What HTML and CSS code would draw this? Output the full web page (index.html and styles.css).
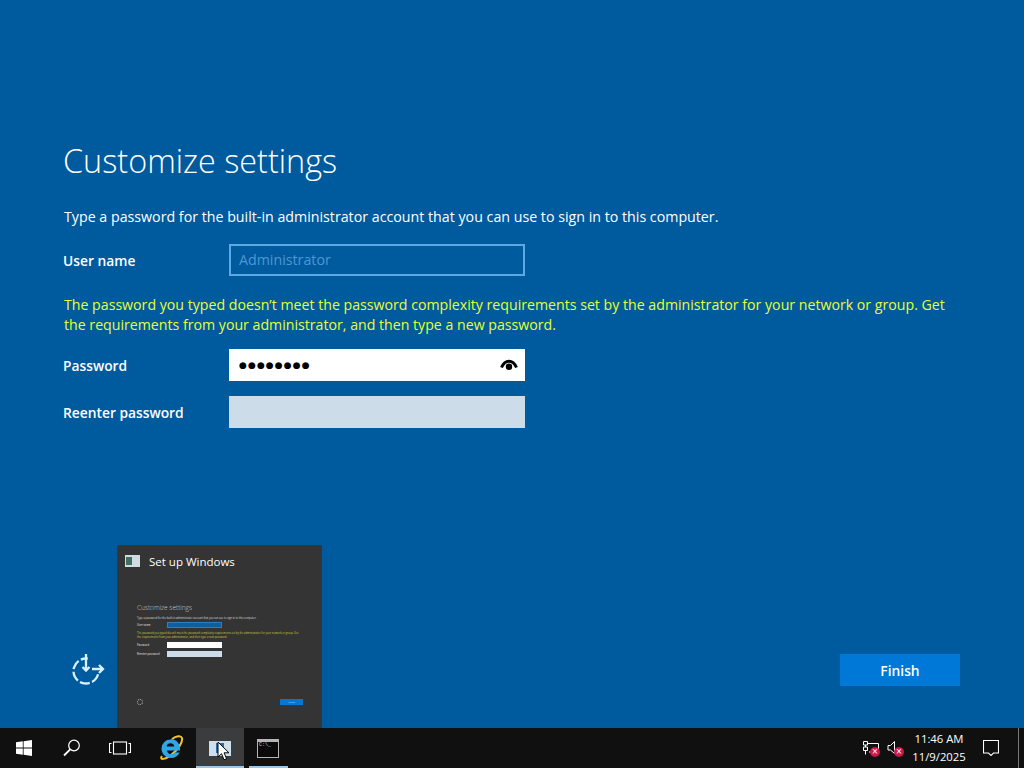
FILE: index.html
```html
<!DOCTYPE html>
<html lang="en">
<head>
<meta charset="utf-8">
<title>Customize settings</title>
<link rel="stylesheet" href="styles.css">
</head>
<body>
<div class="screen">
  <main class="setup">
    <div class="content">
      <h1 class="title">Customize settings</h1>
      <p class="intro">Type a password for the built-in administrator account that you can use to sign in to this computer.</p>
      <div class="row row-user">
        <label class="label">User name</label>
        <div class="field field-disabled">Administrator</div>
      </div>
      <p class="warning">The password you typed doesn’t meet the password complexity requirements set by the administrator for your network or group. Get the requirements from your administrator, and then type a new password.</p>
      <div class="row row-pass">
        <label class="label">Password</label>
        <div class="field field-active">
          <span class="dots">●●●●●●●●</span>
          <svg class="eye" width="18" height="14" viewBox="0 0 18 14"><path d="M1.500 9.500C3.500 5 6 3.200 9 3.200s5.500 1.800 7.500 6.300" fill="none" stroke="#000" stroke-width="3"/><circle cx="9" cy="8.800" r="3.200" fill="#000"/></svg>
        </div>
      </div>
      <div class="row">
        <label class="label">Reenter password</label>
        <div class="field field-empty"></div>
      </div>
    </div>
    <div class="footer">
      <svg class="access" width="36" height="36" viewBox="0 0 36 36" fill="none" stroke="#d8f0ff" stroke-width="2.300">
        <path d="M16 3v16.500M12.500 16 16 19.500 19.500 16"/>
        <path d="M22 18h11M29 14l4 4-4 4"/>
        <circle class="access-ring" cx="16" cy="20" r="12.500" stroke-dasharray="10 2.500 10 2.500 10 2.500 10 2.500 7 21.500"/>
      </svg>
      <button class="finish">Finish</button>
    </div>
    <div class="preview">
      <div class="preview-head">
        <span class="app-icon"><i class="app-green"></i></span>
        <span class="preview-title">Set up Windows</span>
      </div>
      <div class="mini">
        <div class="mini-title">Customize settings</div>
        <div class="mini-intro">Type a password for the built-in administrator account that you can use to sign in to this computer.</div>
        <div class="mini-row"><span class="mini-label">User name</span><span class="mini-field mini-blue"></span></div>
        <div class="mini-warn">The password you typed doesn’t meet the password complexity requirements set by the administrator for your network or group. Get the requirements from your administrator, and then type a new password.</div>
        <div class="mini-row"><span class="mini-label">Password</span><span class="mini-field mini-white"></span></div>
        <div class="mini-row"><span class="mini-label">Reenter password</span><span class="mini-field mini-pale"></span></div>
        <div class="mini-foot"><span class="mini-ring"></span><span class="mini-btn">Finish</span></div>
      </div>
    </div>
  </main>
  <footer class="taskbar">
    <div class="tb-left">
      <div class="tb-btn">
        <svg width="16" height="16" viewBox="0 0 16 16" fill="#fff"><path d="M0 2.300 6.800 1.300V7.600H0zM7.600 1.200 16 0V7.600H7.600zM0 8.400H6.800V14.700L0 13.700zM7.600 8.400H16V16L7.600 14.800z"/></svg>
      </div>
      <div class="tb-btn">
        <svg width="18" height="18" viewBox="0 0 18 18" fill="none" stroke="#fff" stroke-width="1.200"><circle cx="11" cy="6.500" r="5.300"/><path d="M7.200 10.300 1 16.500" stroke-width="1.800"/></svg>
      </div>
      <div class="tb-btn">
        <svg width="22" height="14" viewBox="0 0 22 14" fill="none" stroke="#fff" stroke-width="1.100"><rect x="4.500" y="1" width="13" height="12"/><path d="M2.500 2.500H.5v9h2M19.500 2.500h2v9h-2"/></svg>
      </div>
      <div class="tb-btn tb-ie">
        <svg width="26" height="26" viewBox="0 0 26 26"><path d="M4 21C1 25 7 25 13 20 20 15 25 7 24 3c-1-3-6-2-10 1" fill="none" stroke="#f3c132" stroke-width="2"/><path d="M13 4.500a9 9 0 0 0-9.500 9c0 5.500 4.300 9.500 9.500 9.500 4 0 7.200-2 8.700-5.500h-5.200c-.8 1.200-2 1.800-3.500 1.800-2 0-3.700-1.400-4-3.700h13c.8-6-3.500-11.600-9-11.600zM8.600 11.500c.3-2 2-3.200 3.900-3.200s3.500 1.200 3.800 3.200z" fill="#2fa6e8" fill-rule="evenodd"/></svg>
      </div>
      <div class="tb-btn tb-active">
        <span class="win-icon"><i class="win-blue"></i></span>
      </div>
      <div class="tb-btn tb-open">
        <span class="cmd-icon"><i class="cmd-text">C:\_</i></span>
      </div>
    </div>
    <div class="tray">
      <span class="tray-icon">
        <svg width="16" height="14" viewBox="0 0 16 14" fill="none" stroke="#fff"><path d="M4.500 2.500H15.500v8.500H6M.5.500h4v3.500h-4zM.5 6h4v3.500h-4zM2.500 4v2M2.500 9.500v4"/></svg>
        <i class="badge badge-net">×</i>
      </span>
      <span class="tray-icon">
        <svg width="16" height="14" viewBox="0 0 16 14" fill="none" stroke="#fff"><path d="M1 4.500h2.500L7.500.5v12l-4-3.500H1z"/></svg>
        <i class="badge badge-vol">×</i>
      </span>
      <div class="clock"><div>11:46 AM</div><div>11/9/2025</div></div>
      <div class="notify">
        <svg width="16" height="16" viewBox="0 0 16 16" fill="none" stroke="#fff" stroke-width="1.100"><path d="M.5.500h15v12.500h-5L8 15.500 5.500 13h-5z"/></svg>
      </div>
      <div class="show-desktop"></div>
    </div>
  </footer>
  <svg class="cursor" width="14" height="20" viewBox="0 0 14 20"><path d="M1 1v15l3.500-3.300 2.500 6 2.600-1-2.500-5.900H12z" fill="#fff" stroke="#000"/></svg>
</div>
</body>
</html>
```
FILE: styles.css
```css
* { box-sizing: border-box; }
html, body { margin: 0; padding: 0; height: 100%; }
body { font-family: "Open Sans", "Noto Sans", sans-serif; overflow: hidden; }
.screen { position: relative; width: 1024px; height: 768px; display: flex; flex-direction: column; background: #005a9e; color: #fff; }
.setup { position: relative; flex: 1; display: flex; flex-direction: column; justify-content: space-between; padding: 139px 64px 41px 63px; }
.title { margin: 0 0 26px 0; font-size: 32.400px; line-height: 42px; font-weight: 300; }
.intro { margin: 0 0 17px 1px; font-size: 14.230px; line-height: 20px; }
.row { display: flex; align-items: center; }
.label { width: 166px; font-size: 13.800px; font-weight: 600; }
.field { width: 296px; height: 32px; }
.field-disabled { border: 2px solid #5ea8e6; color: #4f97d3; font-size: 14.230px; line-height: 28px; padding-left: 8px; }
.warning { margin: 19px 0 14px 1px; font-size: 14.170px; line-height: 20px; color: #e6ff33; }
.row-pass { margin-bottom: 15px; }
.field-active { background: #fff; display: flex; align-items: center; justify-content: space-between; padding: 0 7px 0 10px; color: #000; }
.dots { font-size: 9px; letter-spacing: 1.100px; font-family: "DejaVu Sans", sans-serif; }
.field-empty { background: #ccdce9; }
.footer { display: flex; justify-content: space-between; align-items: center; padding: 0 0 0 7px; }
.access { display: block; margin-top: -2px; }
.access-ring { transform: rotate(15deg); transform-origin: 16px 20px; }
.finish { width: 120px; height: 32px; border: 0; background: #0078d7; color: #fff; font: 600 13.800px "Open Sans", sans-serif; }
.preview { position: absolute; left: 117px; top: 545px; width: 205px; height: 183px; background: #343434; border: 1px solid #2b3a46; border-bottom: 0; border-radius: 2px 2px 0 0; padding: 0 18px 0 19px; }
.preview-head { display: flex; align-items: center; gap: 9px; height: 30px; margin-left: -12px; }
.app-icon { position: relative; width: 15px; height: 12px; background: #cfdde3; display: block; }
.app-green { position: absolute; left: 1px; top: 2px; width: 6px; height: 8px; background: #3f6f60; }
.preview-title { font-size: 11.500px; }
.mini { padding-top: 27px; color: #ccc; }
.mini-title { font-size: 6.500px; line-height: 9px; font-weight: 300; margin-bottom: 4px; }
.mini-intro { font-size: 2.600px; line-height: 4px; margin-bottom: 2px; color: #ddd; white-space: nowrap; }
.mini-row { display: flex; align-items: center; height: 6px; margin-bottom: 3px; }
.mini-label { width: 30px; font-size: 2.600px; font-weight: 600; white-space: nowrap; }
.mini-field { width: 55px; height: 6px; display: block; }
.mini-blue { background: #0f5f9c; border: 1px solid #2f7fbf; }
.mini-white { background: #fff; }
.mini-pale { background: #ccdce9; }
.mini-warn { font-size: 2.600px; line-height: 4px; color: #cfcf3a; margin: 0 0 3px; width: 166px; }
.mini-foot { display: flex; justify-content: space-between; align-items: center; margin-top: 42px; }
.mini-ring { width: 6px; height: 6px; border: 1px dotted #bbb; border-radius: 50%; display: block; }
.mini-btn { width: 23px; height: 6px; background: #0078d7; color: #cde; font-size: 2.500px; line-height: 6px; text-align: center; }
.taskbar { height: 40px; background: #101010; display: flex; justify-content: space-between; }
.tb-left { display: flex; }
.tb-btn { position: relative; width: 48px; height: 40px; display: flex; align-items: center; justify-content: center; }
.tb-ie { width: 52px; padding-left: 2px; }
.tb-open::after { content: ""; position: absolute; left: 5px; right: 4px; bottom: 0; height: 2px; background: #9cc6e8; }
.tb-active { background: #3a3c3e; }
.tb-active::after { content: ""; position: absolute; left: 0; right: 0; bottom: 0; height: 2px; background: #9cc6e8; }
.win-icon { position: relative; width: 22px; height: 15px; background: #cfdfec; display: block; }
.win-blue { position: absolute; left: 7px; top: 2px; width: 8px; height: 10px; background: #2a6eb0; }
.cmd-icon { display: block; width: 22px; height: 19px; background: #0a0a0a; border: 1px solid #b5b5b5; border-top-width: 3px; }
.cmd-text { display: block; font: normal 5px/6px "Liberation Mono", monospace; color: #ddd; padding-left: 1px; }
.tray { display: flex; align-items: center; }
.tray-icon { position: relative; width: 24px; height: 40px; display: flex; align-items: center; justify-content: center; }
.badge { position: absolute; width: 10px; height: 10px; border-radius: 50%; background: #c9184a; color: #fff; font: normal 10px/10px "Liberation Sans", sans-serif; text-align: center; top: 19px; }
.badge-net { left: 11px; }
.badge-vol { left: 11px; }
.clock { width: 60px; padding-left: 4px; font-size: 11.300px; line-height: 18px; white-space: nowrap; display: flex; flex-direction: column; align-items: center; }
.notify { width: 48px; height: 40px; display: flex; align-items: center; justify-content: center; }
.show-desktop { width: 9px; height: 40px; border-right: 5px solid #101010; position: relative; }
.show-desktop::after { content: ""; position: absolute; right: 0; top: 0; width: 1px; height: 40px; background: #777; }
.cursor { position: absolute; left: 217px; top: 741px; }
```
